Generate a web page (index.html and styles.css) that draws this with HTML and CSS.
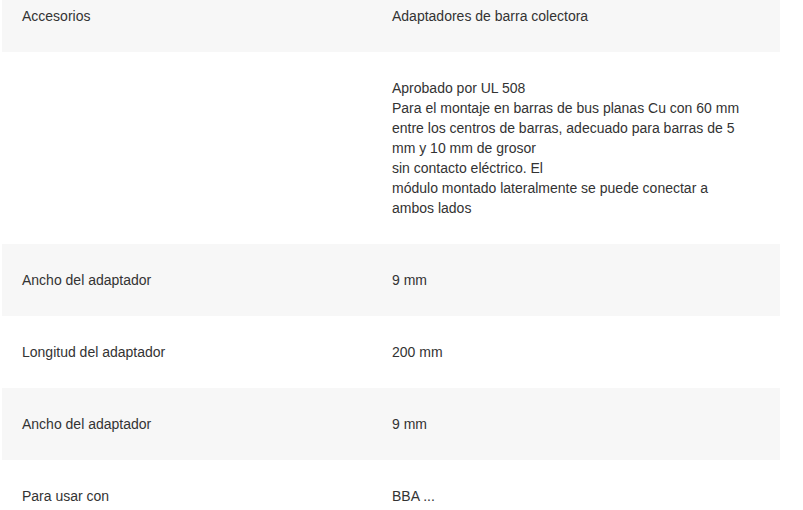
FILE: index.html
```html
<!DOCTYPE html>
<html lang="es">
<head>
<meta charset="utf-8">
<title>Accesorios</title>
<link rel="stylesheet" href="styles.css">
</head>
<body>
<table class="specs">
  <tbody>
    <tr class="alt">
      <td class="label">Accesorios</td>
      <td class="value">Adaptadores de barra colectora</td>
    </tr>
    <tr>
      <td class="label"></td>
      <td class="value">Aprobado por UL 508<br>Para el montaje en barras de bus planas Cu con 60 mm entre los centros de barras, adecuado para barras de 5 mm y 10 mm de grosor<br>sin contacto eléctrico. El<br>módulo montado lateralmente se puede conectar a ambos lados</td>
    </tr>
    <tr class="alt">
      <td class="label">Ancho del adaptador</td>
      <td class="value">9 mm</td>
    </tr>
    <tr>
      <td class="label">Longitud del adaptador</td>
      <td class="value">200 mm</td>
    </tr>
    <tr class="alt">
      <td class="label">Ancho del adaptador</td>
      <td class="value">9 mm</td>
    </tr>
    <tr>
      <td class="label">Para usar con</td>
      <td class="value">BBA ...</td>
    </tr>
  </tbody>
</table>
</body>
</html>
```

FILE: styles.css
```css
html, body {
  margin: 0;
  padding: 0;
  background: #ffffff;
}

body {
  font-family: "Liberation Sans", Arial, sans-serif;
  font-size: 14px;
  line-height: 20px;
  color: #333333;
  padding-left: 2px;
}

.specs {
  border-collapse: collapse;
  width: 778px;
  table-layout: fixed;
  margin-top: -20px;
}

.specs td {
  padding: 26px 20px;
  vertical-align: middle;
  text-align: left;
}

.specs td.label {
  width: 330px;
}

.specs td.value {
  padding-right: 33px;
}

.specs tr.alt {
  background: #f7f7f7;
}
```
